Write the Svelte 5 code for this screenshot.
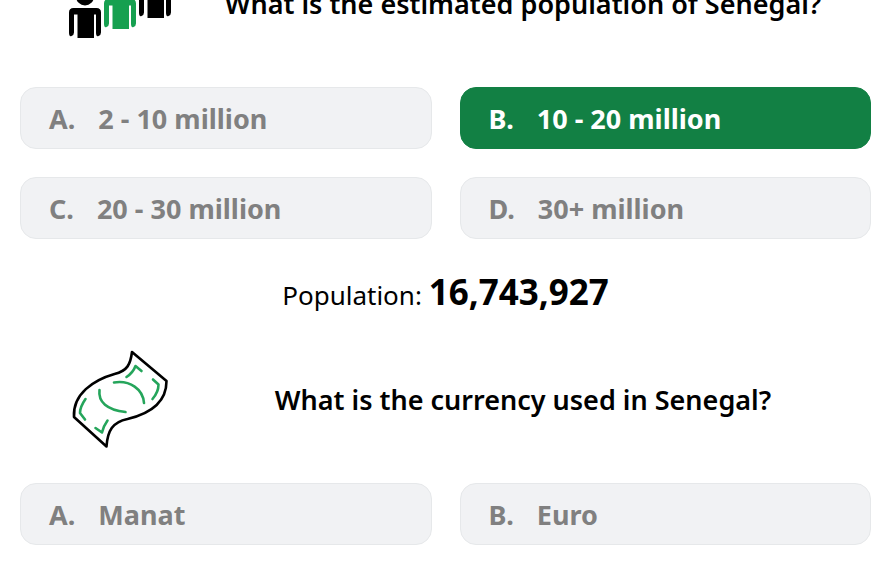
<script>
  const questions = [
    {
      id: 'population',
      title: 'What is the estimated population of Senegal?',
      options: ['2 - 10 million', '10 - 20 million', '20 - 30 million', '30+ million'],
      correct: 1,
      result: { label: 'Population:', value: '16,743,927' }
    },
    {
      id: 'currency',
      title: 'What is the currency used in Senegal?',
      options: ['Manat', 'Euro'],
      correct: -1
    }
  ];
  const people = [
    { x: -31, y: 22, colour: '#000' },
    { x: 4, y: 13, colour: '#16a050' },
    { x: 39, y: 2, colour: '#000' }
  ];
</script>

<main>
  {#each questions as q}
    <section>
      <header>
        <svg viewBox="0 0 100 100" aria-hidden="true">
          {#if q.id === 'population'}
            {#each people as p}
              <g transform="translate({p.x} {p.y})" fill={p.colour}>
                <circle cx="47" cy="21.500" r="9" />
                <path d="M35.500 33H58.500Q63 33 63 37.500V57.500Q63 60 60.500 61T58 57.500V39.500H56V63H39.500V39.500H36V57.500Q36 60 33.500 61T31 57.500V37.500Q31 33 35.500 33Z" />
              </g>
            {/each}
          {:else}
            <g fill="none" stroke-linecap="round" stroke-linejoin="round">
              <path stroke="#000" stroke-width="2.6" d="M63 3L97.500 32C97.500 55 79.500 65 58.500 70C43.500 73 38.500 82 37.500 97.500L5 68C3.500 45 24.500 31 45.500 25C58.500 22 61.500 15 63 3Z" />
              <g stroke="#25a55b" stroke-width="2.6">
                <path d="M45 33.500C61 31 74 40 75 54" />
                <path d="M30.500 41C29 53 38 61 56.500 63" />
                <path d="M57.500 28C62 25 65 21 66.500 17L72.500 22" />
                <path d="M84 30.500L89.500 35.500C89.500 42 87 46 83.500 50" />
                <path d="M16.500 50C13 55 11 59 11 64L16 70.500" />
                <path d="M26.500 79L33 83.500C34 79 36 75 38.500 71.500" />
              </g>
            </g>
          {/if}
        </svg>
        <h2>{q.title}</h2>
      </header>
      <div class="options">
        {#each q.options as option, i}
          <button type="button" class:correct={i === q.correct}>
            <span class="letter">{'ABCD'[i]}.</span>{option}
          </button>
        {/each}
      </div>
      {#if q.result}
        <p>{q.result.label} <strong>{q.result.value}</strong></p>
      {/if}
    </section>
  {/each}
</main>

<style>
  :global(body) {
    background: #fff;
  }
  main {
    box-sizing: border-box;
    height: 100vh;
    overflow: hidden;
    padding: 0 9px 0 20px;
    font-family: 'Noto Sans', 'Open Sans', sans-serif;
    color: #000;
  }
  section:first-child {
    margin-top: -47px;
  }
  header {
    display: flex;
    align-items: center;
    padding-left: 49px;
    gap: 6px;
  }
  svg {
    flex: none;
    width: 100px;
    height: 100px;
    overflow: visible;
  }
  h2 {
    flex: 1;
    margin: 0;
    padding-top: 2px;
    text-align: center;
    font-size: 27px;
    line-height: 36px;
    font-weight: 600;
  }
  .options {
    display: grid;
    grid-template-columns: 1fr 1fr;
    gap: 28px;
    margin-top: 34px;
  }
  button {
    height: 62px;
    padding: 2px 28px 0;
    border: 1px solid #e6e8ea;
    border-radius: 16px;
    background: #f1f2f4;
    color: #808080;
    font: inherit;
    font-size: 27px;
    line-height: 36px;
    font-weight: 700;
    text-align: left;
  }
  button.correct {
    border-color: #128044;
    background: #128044;
    color: #fff;
  }
  .letter {
    margin-right: 23px;
  }
  p {
    margin: 29px 0 30px;
    text-align: center;
    font-size: 26px;
    line-height: 48px;
  }
  strong {
    font-size: 35px;
    font-weight: 700;
  }
</style>
